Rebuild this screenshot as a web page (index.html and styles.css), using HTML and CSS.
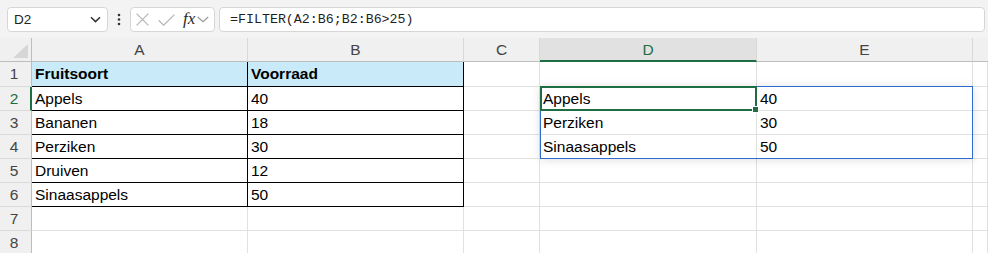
FILE: index.html
```html
<!DOCTYPE html>
<html lang="nl">
<head>
<meta charset="utf-8">
<title>Excel FILTER</title>
<link rel="stylesheet" href="styles.css">
</head>
<body>
<div class="toolbar">
  <div class="namebox">
    <span class="nb-text">D2</span>
    <svg class="nb-chev" width="11" height="7" viewBox="0 0 11 7"><path d="M1 1.2 L5.5 5.6 L10 1.2" fill="none" stroke="#333" stroke-width="1.5"/></svg>
  </div>
  <div class="dots">
    <svg width="4" height="13" viewBox="0 0 4 13"><circle cx="2" cy="2" r="1.3" fill="#333"/><circle cx="2" cy="6.5" r="1.3" fill="#333"/><circle cx="2" cy="11" r="1.3" fill="#333"/></svg>
  </div>
  <div class="fxbox">
    <svg class="ic-x" width="13" height="13" viewBox="0 0 13 13"><path d="M0.6 0.6 L12.4 12.4 M12.4 0.6 L0.6 12.4" stroke="#b8b8b8" stroke-width="1.3" fill="none"/></svg>
    <svg class="ic-check" width="17" height="12" viewBox="0 0 17 12"><path d="M0.6 6.2 L5.6 11.2 L16.4 0.6" stroke="#b8b8b8" stroke-width="1.3" fill="none"/></svg>
    <span class="fx">fx</span>
    <svg class="ic-chev" width="12" height="7" viewBox="0 0 12 7"><path d="M0.8 1 L6 5.8 L11.2 1" fill="none" stroke="#9a9a9a" stroke-width="1.2"/></svg>
  </div>
  <div class="formula">=FILTER(A2:B6;B2:B6&gt;25)</div>
</div>

<div class="sheet">
  <div class="corner"><div class="tri"></div></div>
  <div class="ch">A</div>
  <div class="ch">B</div>
  <div class="ch">C</div>
  <div class="ch ch-sel">D</div>
  <div class="ch">E</div>
  <div class="ch ch-last"></div>

  <div class="rh">1</div>
  <div class="c t hd bold">Fruitsoort</div>
  <div class="c t hd bold">Voorraad</div>
  <div class="c"></div>
  <div class="c"></div>
  <div class="c"></div>
  <div class="c"></div>

  <div class="rh rh-sel">2</div>
  <div class="c t">Appels</div>
  <div class="c t">40</div>
  <div class="c"></div>
  <div class="c">Appels</div>
  <div class="c">40</div>
  <div class="c"></div>

  <div class="rh">3</div>
  <div class="c t">Bananen</div>
  <div class="c t">18</div>
  <div class="c"></div>
  <div class="c">Perziken</div>
  <div class="c">30</div>
  <div class="c"></div>

  <div class="rh">4</div>
  <div class="c t">Perziken</div>
  <div class="c t">30</div>
  <div class="c"></div>
  <div class="c">Sinaasappels</div>
  <div class="c">50</div>
  <div class="c"></div>

  <div class="rh">5</div>
  <div class="c t">Druiven</div>
  <div class="c t">12</div>
  <div class="c"></div>
  <div class="c"></div>
  <div class="c"></div>
  <div class="c"></div>

  <div class="rh">6</div>
  <div class="c t">Sinaasappels</div>
  <div class="c t">50</div>
  <div class="c"></div>
  <div class="c"></div>
  <div class="c"></div>
  <div class="c"></div>

  <div class="rh">7</div>
  <div class="c"></div>
  <div class="c"></div>
  <div class="c"></div>
  <div class="c"></div>
  <div class="c"></div>
  <div class="c"></div>

  <div class="rh">8</div>
  <div class="c"></div>
  <div class="c"></div>
  <div class="c"></div>
  <div class="c"></div>
  <div class="c"></div>
  <div class="c"></div>

  <div class="spill"></div>
  <div class="active"><span class="handle"></span></div>
</div>
</body>
</html>
```

FILE: styles.css
```css
html, body {
  margin: 0;
  padding: 0;
  background: #ffffff;
  overflow: hidden;
}

body {
  width: 988px;
  height: 253px;
  font-family: "Liberation Sans", Arial, sans-serif;
}

/* ---------- toolbar ---------- */
.toolbar {
  height: 38px;
  box-sizing: border-box;
  background: #f3f3f3;
  display: flex;
  align-items: flex-start;
  padding: 7px 3px 0 7px;
}

.namebox,
.fxbox,
.formula {
  box-sizing: border-box;
  height: 25px;
  background: #ffffff;
  border: 1px solid #d6d6d6;
  border-radius: 4px;
}

.namebox {
  width: 101px;
  display: flex;
  align-items: center;
  padding: 0 6px 0 6px;
}

.nb-text {
  font-size: 13.5px;
  color: #222;
  flex: 1;
}

.nb-chev {
  display: block;
}

.dots {
  width: 22px;
  height: 25px;
  display: flex;
  align-items: center;
  justify-content: center;
}

.dots svg {
  display: block;
}

.fxbox {
  width: 85px;
  display: flex;
  align-items: center;
  padding-left: 5px;
}

.ic-x {
  display: block;
  margin-right: 9px;
}

.ic-check {
  display: block;
  margin-right: 8px;
}

.fx {
  font-family: "Liberation Serif", "Times New Roman", serif;
  font-style: italic;
  font-size: 17px;
  color: #2a2a2a;
  line-height: 1;
  margin-right: 2px;
  margin-top: -2px;
}

.ic-chev {
  display: block;
}

.formula {
  flex: 1;
  margin-left: 4px;
  display: flex;
  align-items: center;
  padding-left: 10px;
  font-family: "Liberation Mono", "Courier New", monospace;
  font-size: 13.3px;
  color: #1f1f1f;
}

/* ---------- sheet ---------- */
.sheet {
  display: grid;
  grid-template-columns: 32px 216px 216px 76px 217px 216px 1fr;
  grid-template-rows: 24px 25px repeat(7, 24px);
  position: relative;
  font-size: 15.5px;
  color: #000;
}

.sheet > div {
  box-sizing: border-box;
}

.corner {
  background: #f0f0f0;
  border-right: 1px solid #bdbdbd;
  border-bottom: 1px solid #bdbdbd;
  display: flex;
  align-items: flex-end;
  justify-content: flex-end;
  padding: 0 3px 3px 0;
}

.tri {
  width: 15px;
  height: 14px;
  background: #d6d6d6;
  clip-path: polygon(100% 0, 100% 100%, 0 100%);
}

.ch {
  background: #f0f0f0;
  border-bottom: 1px solid #bdbdbd;
  border-right: 1px solid #d9d9d9;
  display: flex;
  align-items: center;
  justify-content: center;
  color: #444;
  font-size: 15.5px;
}

.ch-sel {
  background: #e1e1e1;
  color: #1f6e43;
  border-bottom: 2px solid #1f6e43;
  padding-top: 1px;
}

.ch-last {
  border-right: none;
}

.rh {
  background: #f0f0f0;
  border-right: 1px solid #bdbdbd;
  border-bottom: 1px solid #dadada;
  display: flex;
  align-items: center;
  justify-content: center;
  color: #444;
  font-size: 15.5px;
  padding-right: 3px;
}

.rh-sel {
  color: #1f6e43;
  border-right: 2px solid #1f6e43;
  padding-right: 2px;
}

.c {
  border-right: 1px solid #e1e1e1;
  border-bottom: 1px solid #e1e1e1;
  display: flex;
  align-items: center;
  padding: 0 3px;
  white-space: nowrap;
  overflow: hidden;
}

.c.t {
  border-right-color: #000;
  border-bottom-color: #000;
}

.c.hd {
  background: #c9ebf9;
}

.bold {
  font-weight: bold;
}

/* spill range D2:E4 (overlay on its grid area) */
.spill {
  position: absolute;
  grid-column: 5 / 7;
  grid-row: 3 / 6;
  top: -1px;
  left: 0;
  right: 0;
  bottom: 0;
  border: 1px solid #2e6bd0;
  box-shadow: 0 1px 9px rgba(0, 0, 0, 0.13);
  pointer-events: none;
}

/* active cell D2 */
.active {
  position: absolute;
  grid-column: 5 / 6;
  grid-row: 3 / 4;
  top: -1px;
  left: 0;
  right: 0;
  bottom: 0;
  border: 2px solid #1f6e43;
  pointer-events: none;
}

.handle {
  position: absolute;
  right: -4px;
  bottom: -4px;
  width: 5px;
  height: 5px;
  background: #1f6e43;
  border: 1px solid #ffffff;
}
```
